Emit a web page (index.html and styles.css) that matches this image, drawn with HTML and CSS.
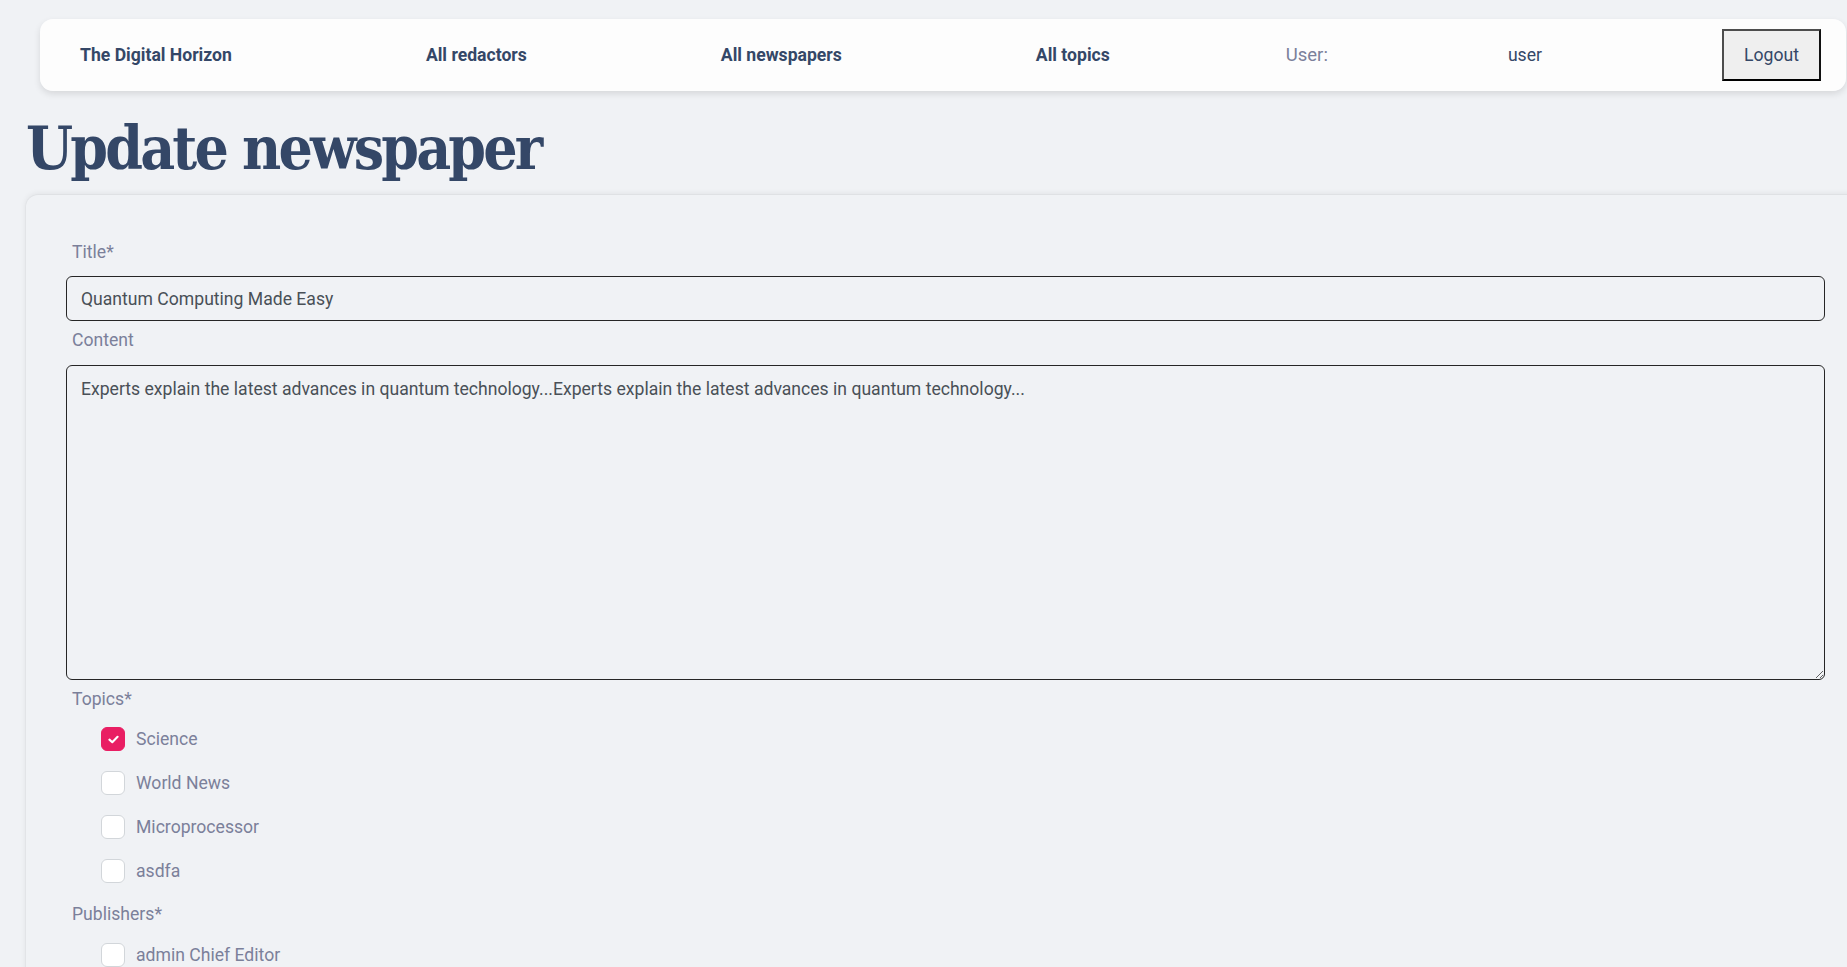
FILE: index.html
```html
<!DOCTYPE html>
<html lang="en">
<head>
<meta charset="utf-8">
<title>Update newspaper</title>
<link rel="stylesheet" href="styles.css">
</head>
<body>
<nav class="navbar">
  <div class="nav-main">
    <a class="nav-link" href="#">The Digital Horizon</a>
    <a class="nav-link" href="#">All redactors</a>
    <a class="nav-link" href="#">All newspapers</a>
    <a class="nav-link" href="#">All topics</a>
  </div>
  <div class="nav-user">
    <span class="user-label">User:</span>
    <span class="user-name">user</span>
  </div>
  <button class="logout" type="button">Logout</button>
</nav>

<h1 class="page-title">Update newspaper</h1>

<form class="card">
  <label class="field-label" for="title">Title*</label>
  <input class="text-input" id="title" type="text" value="Quantum Computing Made Easy">

  <label class="field-label" for="content">Content</label>
  <textarea class="text-area" id="content">Experts explain the latest advances in quantum technology...Experts explain the latest advances in quantum technology...</textarea>

  <div class="field-label group-label">Topics*</div>
  <div class="check-list">
    <label class="check-row"><span class="box checked"><svg viewBox="0 0 10 8" width="11" height="9"><path d="M1.3 4.1 L3.9 6.5 L8.7 1.5" fill="none" stroke="#fff" stroke-width="1.9" stroke-linecap="round" stroke-linejoin="round"/></svg></span>Science</label>
    <label class="check-row"><span class="box"></span>World News</label>
    <label class="check-row"><span class="box"></span>Microprocessor</label>
    <label class="check-row"><span class="box"></span>asdfa</label>
  </div>

  <div class="field-label group-label">Publishers*</div>
  <div class="check-list">
    <label class="check-row"><span class="box"></span>admin Chief Editor</label>
  </div>
</form>
</body>
</html>
```

FILE: styles.css
```css
html, body {
  margin: 0;
  padding: 0;
  overflow: hidden;
}

body {
  background: #f0f2f5;
  font-family: Roboto, "Liberation Sans", sans-serif;
  font-size: 17.6px;
  color: #344767;
}

.navbar {
  display: flex;
  align-items: center;
  height: 72px;
  margin: 19px 1px 0 40px;
  padding: 0 25px 0 40px;
  background: rgba(255, 255, 255, 0.82);
  border-radius: 13px;
  box-shadow: 0 3px 7px rgba(0, 0, 0, 0.11);
}

.nav-main {
  display: flex;
  gap: 194px;
}

.nav-user {
  display: flex;
  align-items: center;
  gap: 180px;
  margin-left: 176px;
}

.nav-link {
  color: #344767;
  font-weight: 700;
  text-decoration: none;
  font-size: 17.6px;
}

.user-label {
  color: #7b809a;
  font-size: 18.5px;
}

.user-name {
  color: #344767;
}

.logout {
  margin-left: auto;
  width: 99px;
  height: 52px;
  background: #efefef;
  border: 2px solid;
  border-color: #4d4d4d #111 #000 #4d4d4d;
  color: #344767;
  font-family: Roboto, "Liberation Sans", sans-serif;
  font-size: 17.6px;
  padding: 0;
}

.page-title {
  margin: 19px 0 8px 26px;
  font-family: "DejaVu Serif Condensed", "DejaVu Serif", serif;
  font-stretch: condensed;
  font-weight: 700;
  font-size: 60px;
  line-height: 77px;
  color: #344767;
  letter-spacing: -2.8px;
}

.card {
  display: block;
  margin: 0 -18px 0 26px;
  padding: 44px 40px 40px;
  background: #f0f2f5;
  border-radius: 12px;
  box-shadow: 0 -1px 6px rgba(0, 0, 0, 0.08), 0 0 0 1px rgba(0, 0, 0, 0.025);
}

.field-label {
  display: block;
  margin: 6px 0 11px 6px;
  line-height: 26.4px;
  color: #7b809a;
}

.card > .field-label:first-child {
  margin-top: 0;
}

.group-label {
  margin-top: 6px;
  margin-bottom: 5px;
}

.check-list + .group-label {
  margin-top: 8px;
}

.text-input,
.text-area {
  display: block;
  width: 100%;
  box-sizing: border-box;
  border: 1px solid #262626;
  border-radius: 6px;
  background: transparent;
  color: #495057;
  font-family: Roboto, "Liberation Sans", sans-serif;
  font-size: 17.6px;
  margin: 0;
}

.text-input {
  height: 45px;
  padding: 0 14px;
}

.text-area {
  height: 315px;
  padding: 10px 14px;
  line-height: 26.4px;
}

.check-list {
  display: flex;
  flex-direction: column;
}

.check-row {
  display: flex;
  align-items: center;
  gap: 11px;
  height: 44px;
  padding-left: 35px;
  color: #7b809a;
}

.box {
  width: 24px;
  height: 24px;
  box-sizing: border-box;
  border: 1px solid #d2d6da;
  border-radius: 6px;
  background: #fff;
  display: flex;
  align-items: center;
  justify-content: center;
}

.box.checked {
  background: #e91e63;
  border-color: #e91e63;
}
```
